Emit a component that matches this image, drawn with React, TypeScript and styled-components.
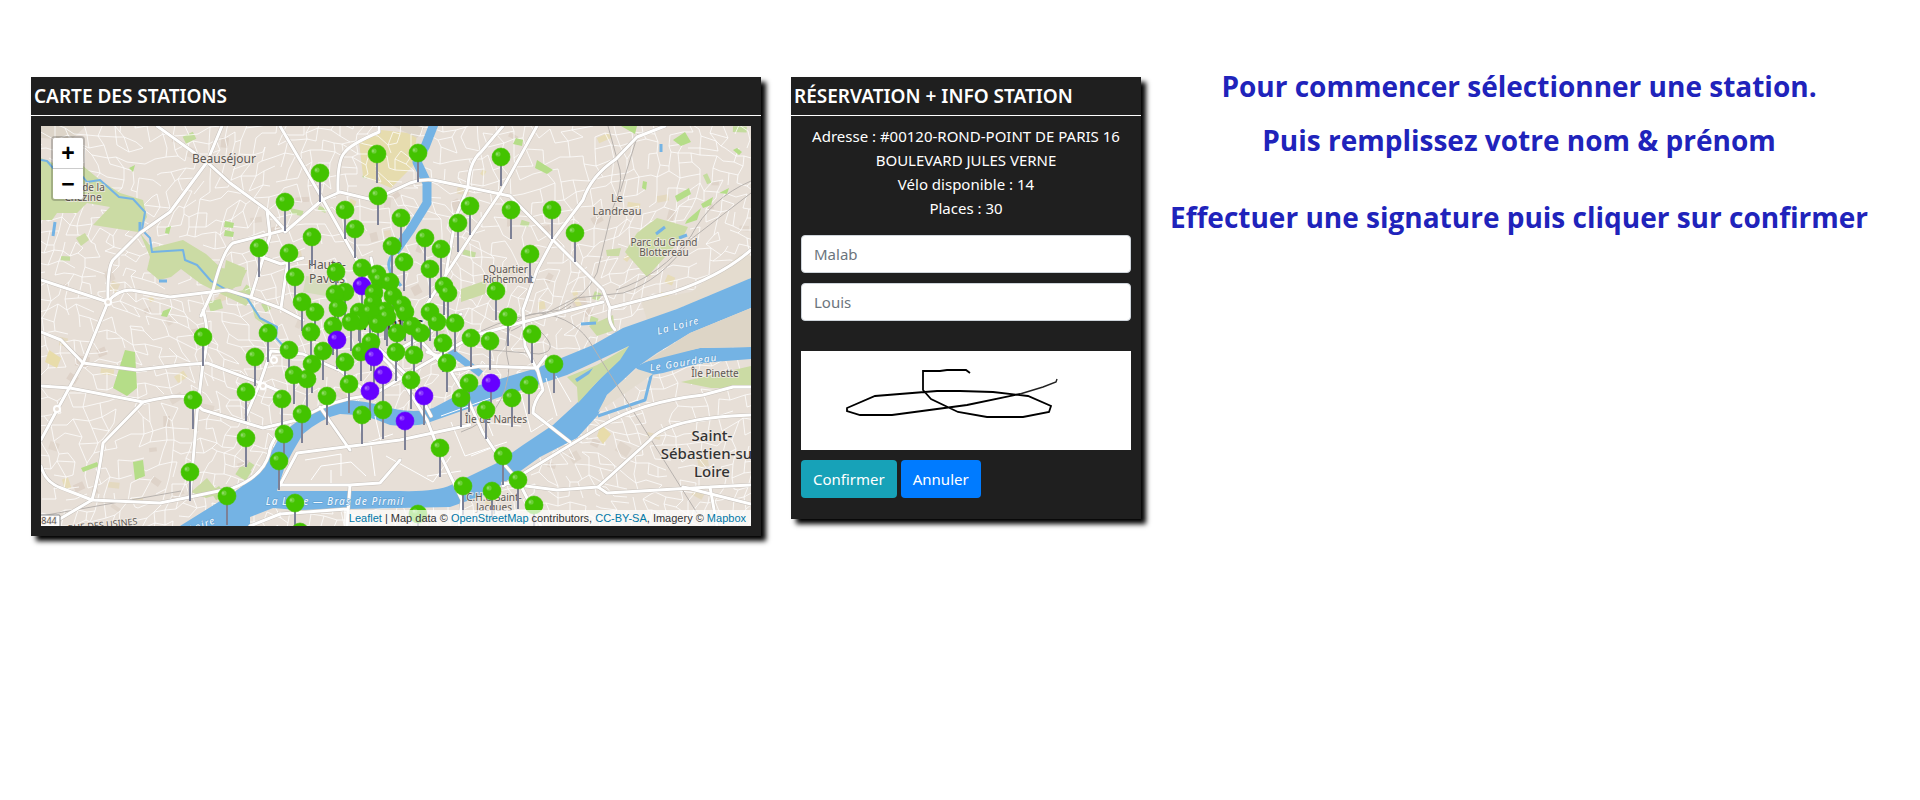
import React from 'react';
import styled, { createGlobalStyle } from 'styled-components';

const GlobalStyle = createGlobalStyle`
  *, *::before, *::after { box-sizing: border-box; }
  body {
    margin: 0;
    background: #fff;
    color: #fff;
    font-family: 'Segoe UI', 'Noto Sans', 'Open Sans', sans-serif;
    font-size: 15px;
    line-height: 24px;
  }
`;

/* ---------- map data ---------- */

type Point = [number, number];

const greenPins: Point[] = [
  [336, 28], [377, 27], [460, 31], [279, 47], [337, 70], [244, 76], [429, 80], [304, 84], [470, 84],
  [511, 84], [360, 92], [417, 97], [314, 103], [534, 107], [271, 111], [384, 112], [351, 120], [218, 122],
  [400, 123], [248, 127], [489, 128], [363, 136], [321, 142], [389, 143], [295, 146], [336, 148],
  [254, 151], [339, 154], [349, 156], [403, 160], [455, 165], [304, 166], [407, 167], [333, 167],
  [294, 168], [352, 170], [261, 176], [332, 177], [361, 179], [297, 182], [344, 185], [274, 186],
  [318, 186], [329, 186], [364, 186], [389, 186], [346, 191], [467, 191], [319, 195], [310, 196],
  [396, 196], [414, 197], [337, 198], [292, 200], [371, 200], [270, 206], [227, 207], [356, 207],
  [380, 207], [491, 208], [162, 211], [430, 212], [449, 215], [330, 216], [402, 217], [248, 224],
  [282, 225], [320, 226], [355, 226], [373, 229], [214, 231], [304, 236], [406, 237], [271, 238],
  [513, 238], [253, 249], [266, 253], [370, 254], [428, 257], [308, 258], [488, 259], [205, 266],
  [286, 270], [420, 272], [471, 272], [241, 273], [152, 274], [342, 284], [445, 284], [261, 288],
  [321, 289], [243, 308], [205, 312], [399, 322], [462, 330], [238, 335], [149, 346], [477, 354],
  [422, 360], [451, 365], [186, 370], [254, 377], [493, 379], [377, 388], [259, 406],
];

const purplePins: Point[] = [
  [321, 160], [296, 214], [333, 231], [342, 249], [450, 257], [329, 265], [383, 270], [364, 295],
];

const pins = [
  ...greenPins.map(([x, y]) => ({ x, y, color: '#43c300' })),
  ...purplePins.map(([x, y]) => ({ x, y, color: '#6600ff' })),
].sort((a, b) => a.y - b.y);

const majorRoads = [
  'M116 0L166 36L189 57L226 84L244 104',
  'M181 0L166 36L129 86L99 107L72 134Q66 142 67 176L42 237L16 284L0 314',
  'M0 154L67 176Q76 164 90 164L129 171L186 164L209 171L239 182L262 194',
  'M239 0L281 72L314 131L330 160',
  'M244 106L281 74L299 66L332 74L369 57Q380 53 392 54L426 61L469 70L512 114L562 164L569 182',
  'M338 0V6Q310 18 304 26Q296 34 297 66',
  'M462 0L440 26Q428 36 427 61L415 90L405 147',
  'M496 0L459 67L430 110L406 147L386 178',
  'M624 0L596 11L575 33Q550 50 542 74L512 114L496 144L482 184L484 220L496 244',
  'M569 182Q566 195 574 204M569 182L632 166Q680 150 710 124',
  'M244 104L192 117Q182 124 172 164L160 190M162 184Q170 210 162 237Q158 270 156 287L149 371',
  'M0 206L20 214L42 237L96 244L139 239L166 237L219 257L245 268',
  'M0 260L29 262L102 276Q135 268 146 271L162 284L222 302L256 294L282 281Q310 270 330 270L380 240L432 210L482 196L562 176',
  'M102 276L62 317Q58 350 51 374L0 404',
  'M0 340Q4 356 20 362L51 374L119 377L149 371L192 362Q222 350 228 328Q230 312 246 300',
  'M226 84L229 110L210 171M248 127L240 182M218 130L240 138L262 132',
  'M279 281L309 324M239 359L256 327L359 314L429 299',
  'M239 359L309 359L339 357L359 334M309 359L306 400M239 388L306 383',
  'M349 240L359 251L386 294L400 330L421 374L418 400',
  'M386 226L402 232L428 276L442 307L462 337L477 354L500 400',
  'M355 225L420 188M370 205L408 245L440 240L496 242L505 230M335 220L372 255L390 290',
  'M496 242L502 264Q492 276 492 287L529 316',
  'M462 360L562 299Q600 276 662 269L692 261L710 261',
  'M462 357L516 364L557 361L609 314Q626 292 710 289',
  'M557 361L566 367L669 361L710 359M669 361L676 400M642 361L710 378',
  'M209 400L239 388M219 257L205 290M219 257L230 225L262 228L300 245L330 270M330 132L340 180L330 220L350 240',
];

const rails = [
  'M567 0L579 44Q582 60 571 84L556 147Q545 170 519 184Q470 190 440 205',
  'M597 8L579 66M710 67L649 114Q620 155 582 167L535 172L470 205',
  'M710 55Q670 72 650 110Q620 150 575 164',
  'M656 387L552 221Q536 192 499 187Q455 190 468 240Q466 290 420 306M530 180Q520 190 480 196',
  'M0 390L140 365M499 205Q520 225 498 228L450 224',
];

const LOIRE_MAIN =
  'M710 152L636 183L582 202L552 219L496 242L432 261L392 282Q375 288 349 282Q325 274 299 274Q281 278 262 291L241 307L228 330L224 341L212 352L192 367L139 400H209V391L232 382L256 384L306 383L409 381L449 367L499 331L536 312L557 289L566 269L596 241L616 227L649 207L710 182Z';
const LOIRE_ISLAND =
  'M236 365L359 365Q395 366 410 359L456 337L482 319L512 299L536 277L556 256L588 220L556 235L526 249L456 272L432 281L392 295Q375 302 349 299Q325 288 299 288Q281 292 262 308L252 325L244 340Z';
const GOURDEAU = 'M594 241L616 231L659 222L710 221V233L659 237L622 247L604 250Z';

/* Small deterministic generator, so that the street pattern is stable. */
function makeRandom(seed: number) {
  let s = seed;
  return () => {
    s = (s * 1664525 + 1013904223) % 4294967296;
    return s / 4294967296;
  };
}

function buildStreets() {
  const rnd = makeRandom(41);
  const step = 11;
  const cols = 70;
  const rows = 42;
  const pts: Point[][] = [];
  for (let j = 0; j < rows; j += 1) {
    pts.push([]);
    for (let i = 0; i < cols; i += 1) {
      const x = i * step - 24;
      const y = j * step - 24;
      const dx = 15 * Math.sin(y / 47 + x / 90) + (rnd() - 0.5) * 8;
      const dy = 15 * Math.sin(x / 53 - y / 80) + (rnd() - 0.5) * 8;
      pts[j].push([Math.round(x + dx), Math.round(y + dy)]);
    }
  }
  let d = '';
  for (let j = 0; j < rows - 1; j += 1) {
    for (let i = 0; i < cols - 1; i += 1) {
      const [x, y] = pts[j][i];
      if (rnd() < 0.66) d += `M${x} ${y}L${pts[j][i + 1][0]} ${pts[j][i + 1][1]}`;
      if (rnd() < 0.62) d += `M${x} ${y}L${pts[j + 1][i][0]} ${pts[j + 1][i][1]}`;
    }
  }
  return d;
}

function buildPlots() {
  const rnd = makeRandom(7);
  const colors = ['#c4dc9e', '#e7dcb8', '#e4d9c0', '#ded3c9', '#e0d6cc', '#ded2c8'];
  return Array.from({ length: 130 }, (_, k) => {
    const x = rnd() * 710;
    const y = rnd() * 400;
    const w = 4 + rnd() * 10;
    const h = 4 + rnd() * 7;
    return { x, y, w, h, a: Math.round(rnd() * 70 - 35), color: colors[k % colors.length] };
  });
}

const streets = buildStreets();
const plots = buildPlots();

/* ---------- styled parts ---------- */

const Page = styled.main`
  display: grid;
  grid-template-columns: minmax(0, 730px) 380px minmax(0, 1fr);
  align-items: start;
  padding: 77px 23px 24px 31px;
`;

const Card = styled.section`
  background: #1f1f1f;
  box-shadow: 5px 5px 5px #000;

  & + & {
    margin-left: 30px;
  }
`;

const CardTitle = styled.h1`
  margin: 0;
  padding: 4px 3px;
  border-bottom: 1px solid #fff;
  font-size: 19px;
  font-weight: 600;
  line-height: 30px;
`;

const CardBody = styled.div`
  padding: 10px;
`;

const MapFrame = styled.div`
  position: relative;
  overflow: hidden;
`;

const MapSvg = styled.svg`
  display: block;
  width: 100%;
  height: 400px;
`;

const PlaceName = styled.text<{ $size?: number; $strong?: boolean }>`
  font-family: 'Noto Sans', sans-serif;
  font-size: ${(p) => p.$size ?? 10}px;
  font-weight: ${(p) => (p.$strong ? 500 : 400)};
  fill: ${(p) => (p.$strong ? '#333' : '#5d5853')};
  stroke: rgba(240, 234, 228, 0.8);
  stroke-width: 2px;
  paint-order: stroke;
  text-anchor: middle;
`;

const WaterName = styled.text`
  font-family: 'Noto Sans', sans-serif;
  font-size: 10px;
  font-style: italic;
  font-weight: 500;
  letter-spacing: 1px;
  fill: #eef6fd;
  stroke: #5b9dd0;
  stroke-width: 1px;
  paint-order: stroke;
  text-anchor: middle;
`;

const ZoomControl = styled.div`
  position: absolute;
  top: 10px;
  left: 10px;
  display: flex;
  flex-direction: column;
  border: 2px solid rgba(0, 0, 0, 0.2);
  border-radius: 4px;
  background-clip: padding-box;
`;

const ZoomButton = styled.button`
  width: 30px;
  height: 30px;
  padding: 0;
  border: 0;
  background: #fff;
  color: #000;
  font-family: 'Liberation Sans', Arial, sans-serif;
  font-size: 23px;
  font-weight: 700;
  line-height: 30px;
  cursor: pointer;

  &:first-child {
    height: 31px;
    border-bottom: 1px solid #ccc;
    border-radius: 2px 2px 0 0;
  }
  &:last-child {
    border-radius: 0 0 2px 2px;
  }
`;

const Attribution = styled.div`
  position: absolute;
  right: 0;
  bottom: 0;
  padding: 0 5px;
  background: rgba(255, 255, 255, 0.7);
  color: #333;
  font-family: 'Liberation Sans', Arial, sans-serif;
  font-size: 11px;
  line-height: 16px;
  white-space: nowrap;

  a {
    color: #0078a8;
    text-decoration: none;
  }
`;

const Reservation = styled.div`
  padding: 8px 10px 21px;
`;

const Info = styled.div`
  padding-bottom: 15px;
  text-align: center;

  p {
    margin: 0;
  }
`;

const Form = styled.form`
  display: flex;
  flex-direction: column;
  gap: 10px;
`;

const Field = styled.input`
  width: 100%;
  height: 38px;
  padding: 6px 12px;
  border: 1px solid #ced4da;
  border-radius: 4px;
  background: #fff;
  color: #495057;
  font: inherit;

  &::placeholder {
    color: #6c757d;
    opacity: 1;
  }
`;

const SignaturePad = styled.svg`
  display: block;
  width: 100%;
  height: 99px;
  margin-top: 20px;
  background: #fff;
`;

const Actions = styled.div`
  display: flex;
  gap: 4px;
`;

const ActionButton = styled.button<{ $color: string }>`
  height: 38px;
  padding: 0 12px;
  border: 0;
  border-radius: 4px;
  background: ${(p) => p.$color};
  color: #fff;
  font: inherit;
  cursor: pointer;
`;

const Steps = styled.div`
  display: flex;
  flex-direction: column;
  margin-top: -8px;
  color: #2023bb;
  font-family: 'Segoe UI', 'Open Sans', sans-serif;
  font-size: 28px;
  font-weight: 700;
  line-height: 34px;
  text-align: center;
`;

const Step = styled.p<{ $after: number }>`
  margin: 0 0 ${(p) => p.$after}px;
`;

/* ---------- components ---------- */

function StationMap() {
  return (
    <MapFrame>
      <MapSvg viewBox="0 0 710 400" preserveAspectRatio="xMidYMid slice" role="img" aria-label="Carte des stations de Nantes">
        <defs>
          <clipPath id="frame">
            <rect width="710" height="400" />
          </clipPath>
        </defs>
        <g clipPath="url(#frame)">
          <rect width="710" height="400" fill="#e7dfd7" />
          {plots.map((p, i) => (
            <rect
              key={i}
              x={p.x}
              y={p.y}
              width={p.w}
              height={p.h}
              fill={p.color}
              transform={`rotate(${p.a} ${p.x} ${p.y})`}
            />
          ))}
          <path d="M318 15L340 4L376 8L372 40L350 62L322 50Z" fill="#e6dcae" />
          <path d="M0 0H45L30 14L0 12ZM352 0H385L376 12Z" fill="#ddd5c9" />
          <path d={streets} fill="none" stroke="#fff" strokeWidth="1" strokeOpacity="0.75" />
          <path d="M600 175L650 166L700 128L710 130V152L636 183L606 194Z" fill="#e4dccf" />

          <g fill="#cbdba4">
            <path d="M0 32L12 37L42 40L59 54L79 67L102 74L106 91L97 106L52 99L69 81L46 77L36 87L16 87L11 94H0Z" />
            <path d="M99 107L111 122L142 114L165 128L180 142L206 144L200 157L186 167L204 164L209 174L205 180L180 168L160 158L140 143L130 151L118 154L106 144L109 131Z" />
            <path d="M616 92L647 101L642 111L606 151L584 126L596 107Z" />
            <path d="M265 150L300 154L296 172L262 166Z" fill="#d5dcbc" />
            <path d="M174 362L166 352L150 366L165 372L192 364ZM420 163L446 154L444 168L420 176Z" />
            <path d="M548 200L572 189L574 204L556 210ZM185 134L204 142L200 160L180 164Z" />
            <path d="M640 256L710 240V262L670 262ZM209 174L220 192L236 200L232 206L214 192Z" />
            <path d="M35 112L44 107L48 114L40 120ZM565 124L580 122L578 130L566 130Z" />
          </g>
          <g fill="#b5dd88">
            <path d="M84 224L94 226L96 262L86 270L72 262ZM184 95L193 97L192 102L183 101ZM92 336L102 334L104 350L94 354Z" />
            <path d="M184 104L193 106L192 111L183 110ZM125 102L130 100L128 108L124 107ZM122 185L130 182L126 191L120 190ZM88 42L94 39L92 46Z" />
            <path d="M475 12L482 14L481 20L472 18ZM496 34L512 44L506 48L494 42ZM634 70L648 62L650 68L636 76ZM602 55L606 56L605 64L601 62Z" />
            <path d="M580 0H596L594 8ZM632 14L644 6L650 16L640 20ZM646 94L660 82L656 94L644 98ZM40 342L56 336L58 340L42 346Z" />
            <path d="M660 78L672 71L670 79L662 82ZM678 67L688 62L686 68ZM696 22L701 26L698 29L692 24Z" />
          </g>
          <path d="M556 310L560 298L570 308L562 318ZM8 224L20 232L16 242L4 236Z" fill="#e8dcaa" />

          <g fill="none" stroke="#74b3e4" strokeLinejoin="round">
            <path
              d="M0 34L6 35L12 42L28 42L42 51L46 56L59 54L68 62L78 71L92 73L104 86L101 104L109 112L111 126L142 124L144 134L156 139L170 155L186 164L206 172L219 192L236 201L235 212L246 224"
              strokeWidth="2"
            />
            <path d="M393 -2L384 21L376 36L386 57V77L370 103L354 126" strokeWidth="9" />
            <path d="M354 126Q344 136 350 147L360 160" strokeWidth="3" />
            <path d="M408 224L440 248" strokeWidth="7" />
            <path d="M611 246L604 274L557 290" strokeWidth="3" />
            <path d="M14 96L12 110M99 96V106M118 155H126M615 108L624 101M638 112L646 109M540 198L555 197M620 18V26" strokeWidth="3" />
          </g>
          <path d={LOIRE_MAIN} fill="#74b3e4" />
          <path d={LOIRE_ISLAND} fill="#e7dfd7" />
          <path d="M588 220L556 239L526 251L536 261L537 277L556 256L579 234Z" fill="#cbdba4" />
          <path d="M534 253L552 242L548 248L536 256Z" fill="#74b3e4" />
          <path d={GOURDEAU} fill="#74b3e4" />
          <path d="M710 182L649 207L604 236L659 222L710 221Z" fill="#ddd5c6" />
          <path d="M612 248L557 286L566 269L596 243Z" fill="#e3dcd0" />
          <path
            d="M264 334L300 328V350M270 354L280 340L310 336L325 350M330 320L334 350M290 344V358M318 292L322 318L352 308M334 290L340 316M400 290L450 272M410 296L424 330L466 316M440 296L480 300M455 275L500 262M480 268L490 306L512 292M505 252L516 290M515 250L530 276M430 330L450 322M386 350L420 345M345 330L392 356L410 330M440 280L452 310"
            fill="none"
            stroke="#fff"
            strokeWidth="1"
          />

          <g fill="none" stroke="#b7b2ae" strokeWidth="1">
            {rails.map((d) => (
              <path key={d} d={d} />
            ))}
          </g>
          <g fill="none" strokeLinejoin="round" strokeLinecap="round">
            {majorRoads.map((d) => (
              <path key={d} d={d} stroke="#c6c0ba" strokeWidth="4" />
            ))}
            {majorRoads.map((d) => (
              <path key={d} d={d} stroke="#fff" strokeWidth="3" />
            ))}
          </g>
          <g fill="#e7dfd7" stroke="#fff" strokeWidth="2">
            <circle cx="67" cy="176" r="3" />
            <circle cx="16" cy="283" r="3" />
            <circle cx="222" cy="260" r="3" />
            <circle cx="233" cy="234" r="3" />
          </g>

          <PlaceName x="183" y="37" $size={12}>Beauséjour</PlaceName>
          <PlaceName x="41" y="65">Parc de la</PlaceName>
          <PlaceName x="42" y="75">Chézine</PlaceName>
          <PlaceName x="286" y="143" $size={12}>Haute-</PlaceName>
          <PlaceName x="286" y="157" $size={12}>Pavois</PlaceName>
          <PlaceName x="467" y="147">Quartier</PlaceName>
          <PlaceName x="467" y="157">Richemont</PlaceName>
          <PlaceName x="576" y="76" $size={11}>Le</PlaceName>
          <PlaceName x="576" y="89" $size={11}>Landreau</PlaceName>
          <PlaceName x="623" y="120">Parc du Grand</PlaceName>
          <PlaceName x="623" y="130">Blottereau</PlaceName>
          <PlaceName x="674" y="251">Île Pinette</PlaceName>
          <PlaceName x="455" y="297">Île de Nantes</PlaceName>
          <PlaceName x="453" y="375">C.H.U Saint-</PlaceName>
          <PlaceName x="453" y="385">Jacques</PlaceName>
          <PlaceName x="352" y="204" $size={18} $strong>Nantes</PlaceName>
          <PlaceName x="671" y="315" $size={15} $strong>Saint-</PlaceName>
          <PlaceName x="671" y="333" $size={15} $strong>Sébastien-sur-</PlaceName>
          <PlaceName x="671" y="351" $size={15} $strong>Loire</PlaceName>
          <PlaceName x="62" y="402" $size={9} transform="rotate(-6 62 402)">RUE DES USINES</PlaceName>
          <WaterName x="638" y="203" transform="rotate(-15 638 203)">La Loire</WaterName>
          <WaterName x="643" y="240" transform="rotate(-9 643 240)">Le Gourdeau</WaterName>
          <WaterName x="294" y="379">La Loire — Bras de Pirmil</WaterName>
          <WaterName x="155" y="405" transform="rotate(-22 155 405)">La Loire</WaterName>
          <rect x="-6" y="389" width="25" height="14" rx="1" fill="#fff" stroke="#8a8a8a" />
          <PlaceName x="8" y="398" $size={9}>844</PlaceName>

          {pins.map((p) => (
            <g key={`${p.x}-${p.y}`} transform={`translate(${p.x} ${p.y})`}>
              <path d="M0 8V29" stroke="#7d8196" strokeWidth="2" />
              <circle r="9" fill={p.color} stroke={p.color} strokeWidth="0.6" />
              <circle cx="-3" cy="-3" r="2.6" fill="#fff" fillOpacity="0.22" />
              <circle cx="-4" cy="-3" r="1.2" fill="#fff" fillOpacity="0.22" />
            </g>
          ))}
        </g>
      </MapSvg>

      <ZoomControl>
        <ZoomButton type="button" aria-label="Zoom avant">+</ZoomButton>
        <ZoomButton type="button" aria-label="Zoom arrière">−</ZoomButton>
      </ZoomControl>

      <Attribution>
        <a href="#leaflet">Leaflet</a> | Map data © <a href="#osm">OpenStreetMap</a> contributors,{' '}
        <a href="#licence">CC-BY-SA</a>, Imagery © <a href="#mapbox">Mapbox</a>
      </Attribution>
    </MapFrame>
  );
}

function Signature() {
  return (
    <SignaturePad viewBox="0 0 330 99" role="img" aria-label="Signature">
      <path
        d="M169 22L165 19H146L139 20H122V39L130 48L157 61L186 66H222L248 61L250 55L227 45L192 41L159 40H136L74 45L46 57V60L59 64H91L166 54L219 43"
        fill="none"
        stroke="#000"
        strokeWidth="1.8"
      />
      <path d="M219 43L242 36L255 31L256 28" fill="none" stroke="#222" strokeWidth="1.4" />
    </SignaturePad>
  );
}

export default function App() {
  return (
    <>
      <GlobalStyle />
      <Page>
        <Card>
          <CardTitle>CARTE DES STATIONS</CardTitle>
          <CardBody>
            <StationMap />
          </CardBody>
        </Card>

        <Card>
          <CardTitle>RÉSERVATION + INFO STATION</CardTitle>
          <Reservation>
            <Info>
              <p>Adresse : #00120-ROND-POINT DE PARIS 16 BOULEVARD JULES VERNE</p>
              <p>Vélo disponible : 14</p>
              <p>Places : 30</p>
            </Info>
            <Form onSubmit={(e) => e.preventDefault()}>
              <Field type="text" name="nom" aria-label="Nom" placeholder="Malab" />
              <Field type="text" name="prenom" aria-label="Prénom" placeholder="Louis" />
              <Signature />
              <Actions>
                <ActionButton type="submit" $color="#17a2b8">Confirmer</ActionButton>
                <ActionButton type="button" $color="#007bff">Annuler</ActionButton>
              </Actions>
            </Form>
          </Reservation>
        </Card>

        <Steps>
          <Step $after={20}>Pour commencer sélectionner une station.</Step>
          <Step $after={43}>Puis remplissez votre nom &amp; prénom</Step>
          <Step $after={0}>Effectuer une signature puis cliquer sur confirmer</Step>
        </Steps>
      </Page>
    </>
  );
}
